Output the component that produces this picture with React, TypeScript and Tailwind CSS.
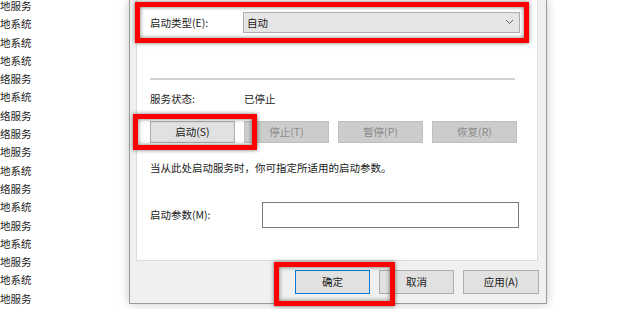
import React from "react";

const rows = [
  "地服务", "地系统", "地系统", "地系统", "络服务", "地系统", "络服务", "络服务", "地服务",
  "地系统", "络服务", "地系统", "地服务", "地系统", "地服务", "地系统", "地服务",
];

function RedBox({ cls }: { cls: string }) {
  return (
    <div
      className={`absolute border-[5px] border-[#ff0000] shadow-[0_0_4px_rgba(0,0,0,0.55),inset_0_0_4px_rgba(0,0,0,0.55)] ${cls}`}
    />
  );
}

export default function App() {
  return (
    <div className="relative w-[620px] h-[309px] bg-white overflow-hidden flex font-['Noto_Sans_CJK_SC','Noto_Sans',sans-serif] text-[10.5px] text-[#1a1a1a]">
      {/* left services list */}
      <div className="w-[129px] shrink-0 overflow-hidden">
        <div className="-mt-[3px] flex flex-col">
          {rows.map((r, i) => (
            <div key={i} className="h-[18.3px] leading-[18.3px] whitespace-nowrap text-[#222]">
              {r}
            </div>
          ))}
        </div>
      </div>

      {/* dialog */}
      <div className="w-[418px] h-[304px] shrink-0 bg-[#f0f0f0] border border-t-0 border-[#9a9a9a] shadow-[0_0_10px_rgba(0,0,0,0.22)] flex flex-col pl-[6px] pr-[8px]">
        <div className="h-[261px] bg-white border border-t-0 border-[#dcdcdc] flex flex-col pl-[13px] pr-[17px]">
          {/* startup type */}
          <div className="mt-[12px] h-[21px] flex items-center">
            <div className="w-[93px]">启动类型(E):</div>
            <div className="flex-1 h-[21px] border border-[#adadad] bg-[#e5e5e5] flex items-center justify-between pl-[3px] pr-[5px]">
              <span>自动</span>
              <svg width="9" height="6" viewBox="0 0 9 6" className="mb-[1px]">
                <path d="M1 1 L4.5 4.5 L8 1" fill="none" stroke="#606060" strokeWidth="1" />
              </svg>
            </div>
          </div>

          <div className="mt-[45px] h-[2px] bg-[#d2d2d2] w-[365px]" />

          {/* status */}
          <div className="mt-[10px] h-[18px] flex items-center">
            <div className="w-[94px]">服务状态:</div>
            <div>已停止</div>
          </div>

          {/* control buttons */}
          <div className="mt-[13px] flex gap-[9px]">
            <div className="w-[85px] h-[22px] border border-[#adadad] bg-[#e1e1e1] flex items-center justify-center">启动(S)</div>
            <div className="w-[85px] h-[22px] border border-[#bfbfbf] bg-[#cccccc] text-[#8a8a8a] flex items-center justify-center">停止(T)</div>
            <div className="w-[85px] h-[22px] border border-[#bfbfbf] bg-[#cccccc] text-[#8a8a8a] flex items-center justify-center">暂停(P)</div>
            <div className="w-[85px] h-[22px] border border-[#bfbfbf] bg-[#cccccc] text-[#8a8a8a] flex items-center justify-center">恢复(R)</div>
          </div>

          <div className="mt-[16px] h-[18px] leading-[18px] whitespace-nowrap">当从此处启动服务时，你可指定所适用的启动参数。</div>

          {/* parameters */}
          <div className="mt-[25px] h-[26px] flex items-center">
            <div className="w-[112px]">启动参数(M):</div>
            <div className="w-[257px] h-[26px] border border-[#7a7a7a] bg-white" />
          </div>
        </div>

        {/* bottom buttons */}
        <div className="mt-[9px] flex justify-end gap-[9px] -mr-[1px]">
          <div className="w-[75px] h-[24px] border border-[#0078d7] bg-[#e1e1e1] flex items-center justify-center">确定</div>
          <div className="w-[75px] h-[24px] border border-[#adadad] bg-[#e1e1e1] flex items-center justify-center">取消</div>
          <div className="w-[76px] h-[24px] border border-[#adadad] bg-[#e1e1e1] flex items-center justify-center">应用(A)</div>
        </div>
      </div>

      {/* red annotation boxes */}
      <RedBox cls="left-[135px] top-[2px] w-[394px] h-[41px]" />
      <RedBox cls="left-[133px] top-[114px] w-[124px] h-[36px]" />
      <RedBox cls="left-[274px] top-[262px] w-[121px] h-[44px]" />
    </div>
  );
}
